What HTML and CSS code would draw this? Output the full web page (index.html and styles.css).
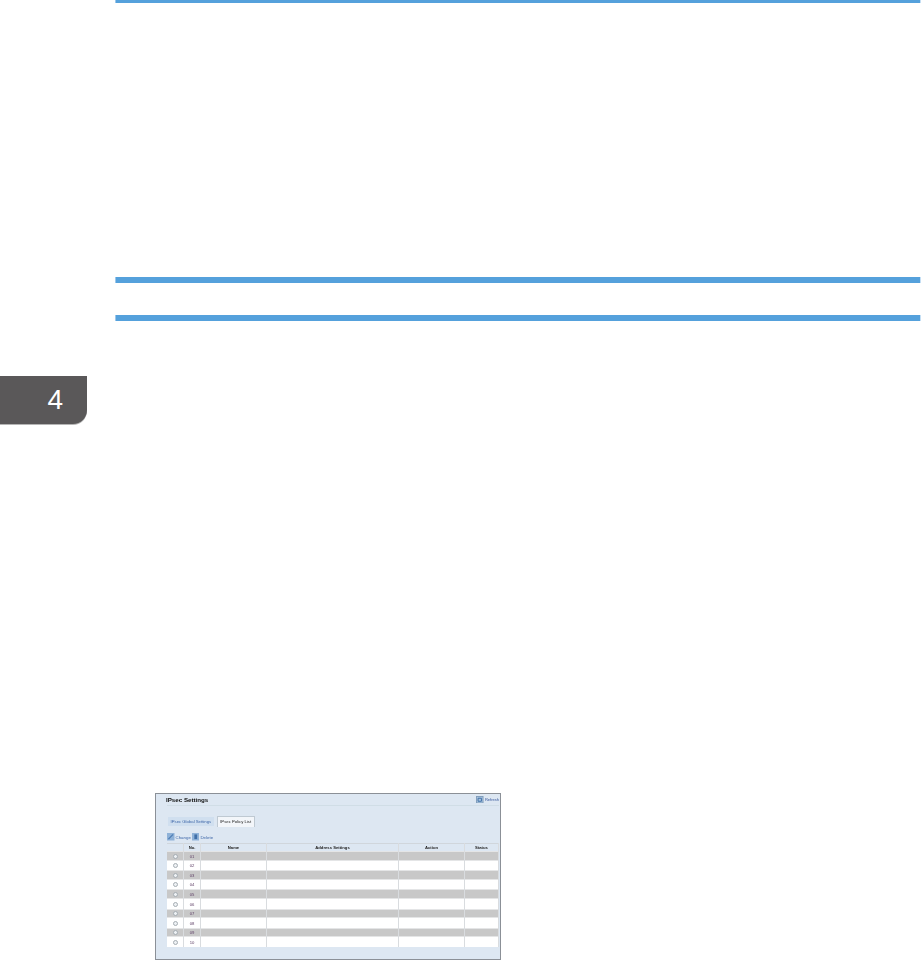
FILE: index.html
```html
<!DOCTYPE html>
<html lang="en">
<head>
<meta charset="utf-8">
<title>IPsec Settings</title>
<link rel="stylesheet" href="styles.css">
</head>
<body>
<div class="page">
  <aside class="side"><div class="chapter">4</div></aside>
  <main class="content">
    <div class="rule rule-top"></div>
    <div class="rule rule-a"></div>
    <div class="rule rule-b"></div>
    <section class="shot">
      <div class="shot-head">
        <h1>IPsec Settings</h1>
        <a class="refresh"><svg class="ico" viewBox="0 0 8 8"><rect x=".5" y=".5" width="7" height="7" fill="#a9c3dc" stroke="#7f9cba"/><path d="M2.2 5.6V2.4h3.6v3.2z" fill="none" stroke="#3f6fa8"/></svg>Refresh</a>
      </div>
      <div class="tabs"><span class="tab">IPsec Global Settings</span><span class="tab active">IPsec Policy List</span></div>
      <div class="actions">
        <svg class="ico" viewBox="0 0 8 8"><rect width="8" height="8" fill="#8fb2d8"/><path d="M1.5 6.5 6.5 1.5" stroke="#4d7db5" stroke-width="1.4"/></svg><a>Change</a>
        <svg class="ico" viewBox="0 0 8 8"><rect width="8" height="8" fill="#8fb2d8"/><rect x="2.5" y="1.5" width="3" height="5" fill="#3f6fa8"/></svg><a>Delete</a>
      </div>
      <div class="grid">
        <div class="row head"><i></i><b>No.</b><b>Name</b><b>Address Settings</b><b>Action</b><b>Status</b></div>
        <div class="row odd"><i><u></u></i><span>01</span><i></i><i></i><i></i><i></i></div>
        <div class="row"><i><u></u></i><span>02</span><i></i><i></i><i></i><i></i></div>
        <div class="row odd"><i><u></u></i><span>03</span><i></i><i></i><i></i><i></i></div>
        <div class="row"><i><u></u></i><span>04</span><i></i><i></i><i></i><i></i></div>
        <div class="row odd"><i><u></u></i><span>05</span><i></i><i></i><i></i><i></i></div>
        <div class="row"><i><u></u></i><span>06</span><i></i><i></i><i></i><i></i></div>
        <div class="row odd"><i><u></u></i><span>07</span><i></i><i></i><i></i><i></i></div>
        <div class="row"><i><u></u></i><span>08</span><i></i><i></i><i></i><i></i></div>
        <div class="row odd"><i><u></u></i><span>09</span><i></i><i></i><i></i><i></i></div>
        <div class="row"><i><u></u></i><span>10</span><i></i><i></i><i></i><i></i></div>
      </div>
    </section>
  </main>
</div>
</body>
</html>
```
FILE: styles.css
```css
html, body { margin: 0; padding: 0; background: #fff; }
body { height: 960px; overflow: hidden; font-family: "Liberation Sans", Arial, sans-serif; }
.page { display: flex; width: 921px; height: 960px; }
.side { width: 115px; flex: none; padding-top: 376px; box-sizing: border-box; }
.chapter { width: 87px; height: 48px; background: #5a5859; border-bottom-right-radius: 14px; box-shadow: 0 1px 0 #b5b5b5; color: #fff; font-size: 28px; line-height: 48px; text-align: right; padding-right: 24px; box-sizing: border-box; }
.content { flex: 1; min-width: 0; }
.rule { height: 6px; width: 806px; box-sizing: border-box; background: #55a1dc; border-left: 1px solid #9cc8ec; border-right: 1px solid #c5dff4; }
.rule-top { height: 3px; }
.rule-a { margin-top: 274px; }
.rule-b { margin-top: 32px; }
.shot { box-sizing: border-box; width: 346px; height: 167px; margin: 472px 0 0 40px; background: #dde7f2; border: 1px solid #8b9097; padding: 0 1px 0 11px; filter: blur(.4px); }
.shot-head { display: flex; justify-content: space-between; align-items: center; height: 12px; box-sizing: border-box; border-bottom: 1px solid #d0dde6; }
h1 { margin: 0 0 0 -1px; font-size: 6.2px; font-weight: 700; color: #111; line-height: 9px; }
.refresh { display: flex; align-items: center; gap: 1px; font-size: 4px; color: #34559a; }
.ico { width: 7.5px; height: 7.5px; flex: none; }
.tabs { display: flex; gap: 3px; margin-top: 10px; height: 11px; padding-left: 1px; }
.tab { font-size: 4.25px; line-height: 9px; padding: 0 2.5px; color: #3d66a8; background: #d0dfef; height: 9px; margin-top: 1px; }
.tab.active { color: #222; background: #f3f6fa; border: 1px solid #bfc9d2; border-bottom: 0; padding: 0 2.5px; height: 11px; margin-top: 0; box-sizing: border-box; }
.actions { display: flex; align-items: center; gap: 1px; margin-top: 6px; height: 8px; font-size: 4.4px; color: #3d66a8; }
.grid { margin-top: 2px; width: 332px; }
.row { display: grid; grid-template-columns: 17px 17px 66px 132px 66px 34px; height: 9.6px; background: #fff; }
.row > * { display: flex; align-items: center; justify-content: center; border-right: 1px solid #d9dcdf; box-sizing: border-box; font-size: 4.2px; color: #5e3f66; font-style: normal; padding-top: .5px; }
.row.head { background: #dde7f2; height: 8px; box-shadow: inset 0 1px 0 #d0d6dc; }
.row.head b { color: #222; font-weight: 700; font-size: 4.2px; }
.row.odd { background: #c8c8c8; box-shadow: inset 0 1px 0 #e4e5e6, inset 0 -1px 0 #e4e5e6; }
.row u { display: block; width: 5px; height: 5px; border-radius: 50%; border: 1px solid #a5adb3; background: #eef1f4; box-sizing: border-box; }
```
